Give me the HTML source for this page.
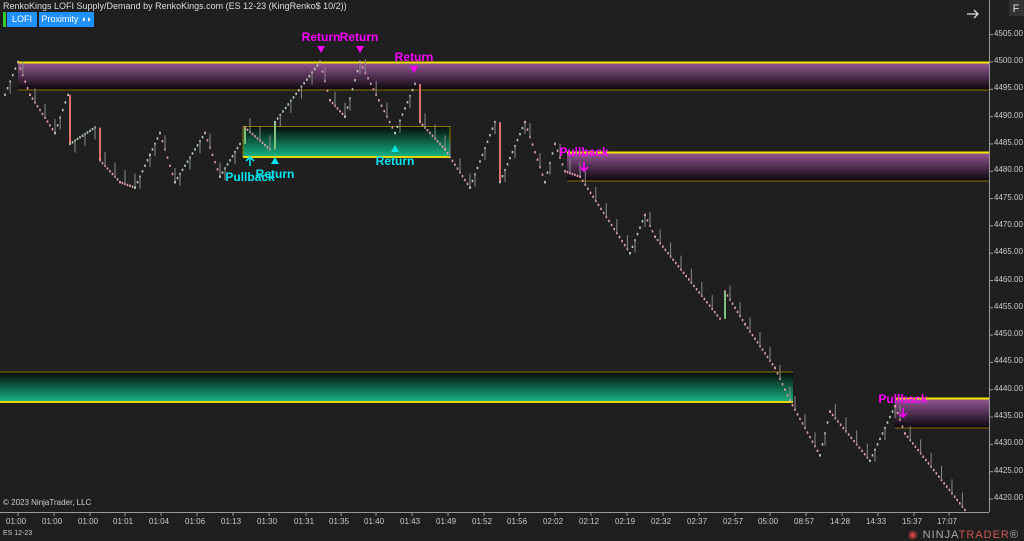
<!DOCTYPE html>
<html><head><meta charset="utf-8">
<style>
html,body{margin:0;padding:0;background:#1f1f1f;width:1024px;height:541px;overflow:hidden;font-family:"Liberation Sans",sans-serif}
#c{position:absolute;left:0;top:0}
.t{position:absolute;color:#ccc;font-size:11px;white-space:nowrap}
.btn{position:absolute;top:12px;height:15px;background:#1e90ff;color:#fff;font-size:9px;line-height:15px;text-align:center}
</style></head><body>
<svg id="c" width="1024" height="541" xmlns="http://www.w3.org/2000/svg">
<defs>
<linearGradient id="pu" x1="0" y1="0" x2="0" y2="1"><stop offset="0" stop-color="#9a5a9a"/><stop offset="1" stop-color="#0a060a"/></linearGradient>
<linearGradient id="gr" x1="0" y1="0" x2="0" y2="1"><stop offset="0" stop-color="#050a08"/><stop offset="1" stop-color="#17b585"/></linearGradient>
</defs>
<rect x="18" y="62" width="971" height="28" fill="url(#pu)"/>
<line x1="18" y1="62.5" x2="989" y2="62.5" stroke="#f5e400" stroke-width="2"/>
<line x1="18" y1="90" x2="989" y2="90" stroke="#8a7000" stroke-width="1"/>
<rect x="243" y="126" width="207" height="31" fill="url(#gr)"/>
<rect x="243" y="126.5" width="207" height="30.5" fill="none" stroke="#8a7a00" stroke-width="1"/>
<line x1="243" y1="157" x2="450" y2="157" stroke="#e8d800" stroke-width="2"/>
<rect x="567" y="152" width="422" height="29" fill="url(#pu)"/>
<line x1="567" y1="152.5" x2="989" y2="152.5" stroke="#f5e400" stroke-width="2"/>
<line x1="567" y1="181" x2="989" y2="181" stroke="#8a7000"/>
<rect x="0" y="372" width="793" height="30" fill="url(#gr)"/>
<line x1="0" y1="372" x2="793" y2="372" stroke="#8a7000"/>
<line x1="0" y1="402" x2="793" y2="402" stroke="#e8d800" stroke-width="2"/>
<rect x="895" y="398" width="94" height="30" fill="url(#pu)"/>
<line x1="895" y1="398.5" x2="989" y2="398.5" stroke="#f5e400" stroke-width="2"/>
<line x1="895" y1="428" x2="989" y2="428" stroke="#8a7000"/>
<g id="bars"></g>
<line x1="989.5" y1="0" x2="989.5" y2="512" stroke="#999"/>
<line x1="0" y1="512.5" x2="989" y2="512.5" stroke="#999"/>
<g id="ticks"></g>
<text x="321" y="41" fill="#ff00ff" font-size="12" font-weight="bold" text-anchor="middle" font-family="Liberation Sans">Return</text>
<text x="359" y="41" fill="#ff00ff" font-size="12" font-weight="bold" text-anchor="middle" font-family="Liberation Sans">Return</text>
<text x="414" y="61" fill="#ff00ff" font-size="12" font-weight="bold" text-anchor="middle" font-family="Liberation Sans">Return</text>
<polygon points="317,46 325,46 321,53" fill="#ff00ff"/>
<polygon points="356,46 364,46 360,53" fill="#ff00ff"/>
<polygon points="410,66 418,66 414,73" fill="#ff00ff"/>
<text x="584" y="156" fill="#ff00ff" font-size="12" font-weight="bold" text-anchor="middle" font-family="Liberation Sans">Pullback</text>
<path d="M584 162 V171 M580 167 L584 171 L588 167" stroke="#ff00ff" stroke-width="1.6" fill="none"/>
<text x="903" y="403" fill="#ff00ff" font-size="12" font-weight="bold" text-anchor="middle" font-family="Liberation Sans">Pullback</text>
<path d="M903 408 V417 M899 413 L903 417 L907 413" stroke="#ff00ff" stroke-width="1.6" fill="none"/>
<path d="M250 166 V157 M246 161 L250 157 L254 161" stroke="#00e5ee" stroke-width="1.6" fill="none"/>
<polygon points="271,164 279,164 275,157" fill="#00e5ee"/>
<polygon points="391,152 399,152 395,145" fill="#00e5ee"/>
<text x="250" y="181" fill="#00e5ee" font-size="12" font-weight="bold" text-anchor="middle" font-family="Liberation Sans">Pullback</text>
<text x="275" y="178" fill="#00e5ee" font-size="12" font-weight="bold" text-anchor="middle" font-family="Liberation Sans">Return</text>
<text x="395" y="165" fill="#00e5ee" font-size="12" font-weight="bold" text-anchor="middle" font-family="Liberation Sans">Return</text>
<path d="M967 14 H978 M974 10 L978 14 L974 18" stroke="#ddd" stroke-width="1.3" fill="none"/>
<rect x="1009" y="0" width="15" height="16" fill="#333"/>
<text x="1016" y="12" fill="#ddd" font-size="11" text-anchor="middle" font-family="Liberation Sans">F</text>
</svg>
<div class="t" style="left:3px;top:1px;font-size:9px;color:#ddd">RenkoKings LOFI Supply/Demand by RenkoKings.com (ES 12-23 (KingRenko$ 10/2))</div>
<div style="position:absolute;left:3px;top:12px;width:3px;height:15px;background:#3c3"></div>
<div class="btn" style="left:7px;width:30px">LOFI</div>
<div class="btn" style="left:39px;width:55px">Proximity ◖◗</div>
<div class="t" style="left:3px;top:498px;font-size:8px">© 2023 NinjaTrader, LLC</div>
<div class="t" style="left:3px;top:530px;font-size:7px">ES 12-23</div>
<div class="t" style="left:908px;top:528px;font-size:11px;letter-spacing:1px;color:#aaa"><span style="color:#c44">◉</span> NINJA<span style="color:#c55">TRADER</span>®</div>
<div id="lab"></div>
<script>
var S='http://www.w3.org/2000/svg';
function Y(p){return 62+(4500-p)*5.4625;}
var lab=document.getElementById('lab'),tk=document.getElementById('ticks'),h='';
for(var p=4505;p>=4420;p-=5){var y=Y(p);h+='<div class="t" style="left:994px;top:'+(y-6)+'px;font-size:8px">'+p+'.00</div>';
var l=document.createElementNS(S,'line');l.setAttribute('x1',989);l.setAttribute('x2',993);l.setAttribute('y1',y);l.setAttribute('y2',y);l.setAttribute('stroke','#999');tk.appendChild(l);}
var tl="01:00 01:00 01:00 01:01 01:04 01:06 01:13 01:30 01:31 01:35 01:40 01:43 01:49 01:52 01:56 02:02 02:12 02:19 02:32 02:37 02:57 05:00 08:57 14:28 14:33 15:37 17:07".split(' ');
var tx=[18,54,90,125,161,197,233,269,306,341,376,412,448,484,519,555,591,627,663,699,735,770,806,842,878,914,949];
for(var i=0;i<tl.length;i++){h+='<div class="t" style="left:'+(tx[i]-12)+'px;top:517px;font-size:8px">'+tl[i]+'</div>';
var l=document.createElementNS(S,'line');l.setAttribute('x1',tx[i]);l.setAttribute('x2',tx[i]);l.setAttribute('y1',512);l.setAttribute('y2',516);l.setAttribute('stroke','#999');tk.appendChild(l);}
lab.innerHTML=h;
var W=[[5,4494],[18,4500],[30,4494],[55,4487],[68,4494],[70,4485],[95,4488],[100,4482],[120,4478],[135,4477],[150,4483],[160,4487],[175,4478],[205,4487],[220,4479],[240,4485],[245,4488],[270,4484],[275,4489],[320,4500],[330,4493],[345,4490],[360,4500],[395,4487],[415,4496],[420,4489],[445,4484],[470,4477],[495,4489],[500,4478],[525,4489],[545,4478],[555,4485],[565,4480],[580,4479],[630,4465],[645,4472],[655,4468],[720,4453],[725,4458],[745,4452],[775,4444],[790,4438],[820,4428],[830,4436],[870,4427],[895,4437],[905,4432],[965,4418]];
var g=document.getElementById('bars'),s='';
for(var i=0;i<W.length-1;i++){var a=W[i],b=W[i+1];var dx=b[0]-a[0],dp=b[1]-a[1];
if(dx<=6){var col=dp>0?'#7fbf7f':'#e07070';s+='<line x1="'+b[0]+'" x2="'+b[0]+'" y1="'+Y(a[1])+'" y2="'+Y(b[1])+'" stroke="'+col+'" stroke-width="2"/>';continue;}
var n=Math.max(2,Math.round(dx/2.6));for(var k=0;k<=n;k++){var x=a[0]+dx*k/n,y=Y(a[1]+dp*k/n);
var c=dp>0?'#b8d0b8':'#e0a0a8';s+='<rect x="'+(x-0.8)+'" y="'+(y-1.2)+'" width="1.6" height="2.4" fill="'+c+'"/>';
if(k%4==2)s+='<line x1="'+x+'" x2="'+x+'" y1="'+y+'" y2="'+(y+(dp>0?12:-14))+'" stroke="#888" stroke-width="1"/>';}}
g.innerHTML=s;
</script>
</body></html>
